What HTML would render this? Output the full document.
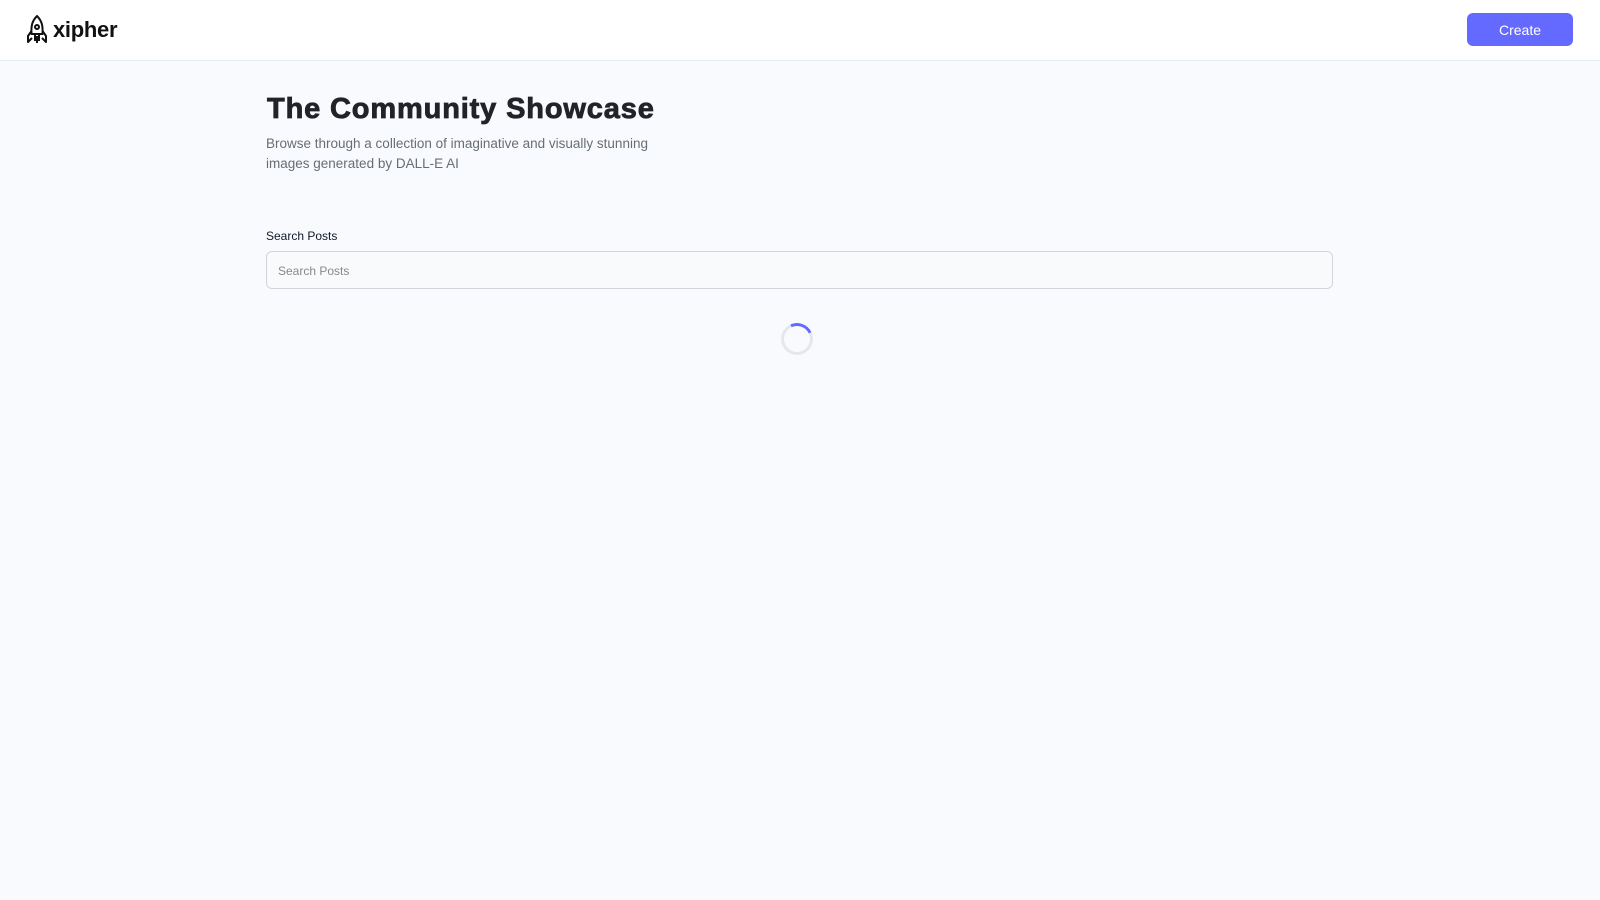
<!DOCTYPE html>
<html><head><style>
*{box-sizing:border-box;margin:0;padding:0}
body{width:1600px;height:900px;background:#f9fafe;font-family:"Liberation Sans",Arial,sans-serif;overflow:hidden;position:relative}
header{position:absolute;left:0;top:0;width:1600px;height:61px;background:#fff;border-bottom:1px solid #e6ebf4}
.logo{position:absolute;left:26px;top:14px;display:flex;align-items:center}
.logo span{font-weight:bold;font-size:22px;color:#111;margin-left:5px;letter-spacing:-0.3px}
.btn{position:absolute;left:1467px;top:13px;width:106px;height:33px;background:#6469ff;color:#fff;border-radius:6px;font-size:14px;display:flex;align-items:center;justify-content:center}
h1{position:absolute;left:267px;top:93px;font-size:29px;font-weight:900;color:#222328;letter-spacing:0.85px;-webkit-text-stroke:0.8px #222328}
p.sub{position:absolute;left:266px;top:134px;width:400px;font-size:13.5px;line-height:20px;color:#666e75}
.lbl{position:absolute;left:266px;top:229px;font-size:12px;color:#111827}
.inp{position:absolute;left:266px;top:251px;width:1067px;height:38px;border:1px solid #d1d5db;border-radius:6px;background:#f9fafb;font-size:12px;color:#888;padding:12px 11px}
.spin{position:absolute;left:781px;top:323px;width:32px;height:32px;border-radius:50%;border:3px solid #e5e7eb;border-top-color:#6469ff;transform:rotate(20deg)}
</style></head><body>
<header>
<div class="logo">
<svg width="22" height="31" viewBox="0 0 22 31" fill="none" stroke="#111" stroke-width="2" stroke-linejoin="round">
<path d="M11 2 C6 7 5 12 5.5 20 L16.5 20 C17 12 16 7 11 2Z"/>
<circle cx="11" cy="13" r="2"/>
<path d="M5.5 17 L2 22 L2 28 L6 24"/><path d="M16.5 17 L20 22 L20 28 L16 24"/>
<path d="M9 20 L9 27 M13 20 L13 27 M11 22 L11 29"/>
</svg>
<span>xipher</span></div>
<div class="btn">Create</div>
</header>
<h1>The Community Showcase</h1>
<p class="sub">Browse through a collection of imaginative and visually stunning images generated by DALL-E AI</p>
<div class="lbl">Search Posts</div>
<div class="inp">Search Posts</div>
<div class="spin"></div>
</body></html>
